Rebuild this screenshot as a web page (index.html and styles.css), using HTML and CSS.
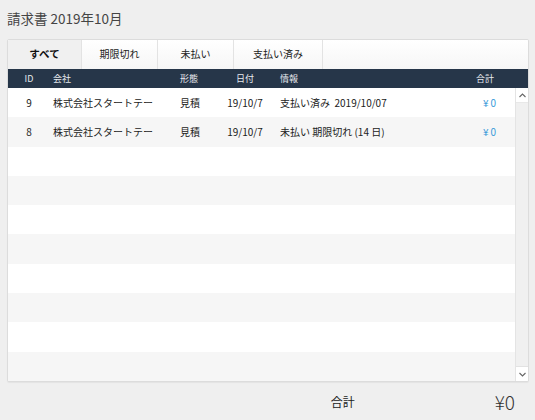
FILE: index.html
```html
<!DOCTYPE html>
<html lang="ja">
<head>
<meta charset="utf-8">
<link rel="stylesheet" href="styles.css">
</head>
<body>
<div class="title">請求書 2019年10月</div>
<div class="panel">
  <div class="tabs">
    <div class="tab active t1">すべて</div>
    <div class="tab t2">期限切れ</div>
    <div class="tab t3">未払い</div>
    <div class="tab t4">支払い済み</div>
  </div>
  <div class="head grid">
    <div class="c-id">ID</div>
    <div class="c-co">会社</div>
    <div class="c-ty">形態</div>
    <div class="c-dt">日付</div>
    <div class="c-in">情報</div>
    <div class="c-tot">合計</div>
  </div>
  <div class="body">
    <div class="rows">
      <div class="row grid">
        <div class="c-id">9</div>
        <div class="c-co">株式会社スタートテー</div>
        <div class="c-ty">見積</div>
        <div class="c-dt">19/10/7</div>
        <div class="c-in">支払い済み&nbsp;&nbsp;2019/10/07</div>
        <div class="c-tot money">¥0</div>
      </div>
      <div class="row grid">
        <div class="c-id">8</div>
        <div class="c-co">株式会社スタートテー</div>
        <div class="c-ty">見積</div>
        <div class="c-dt">19/10/7</div>
        <div class="c-in">未払い 期限切れ (14 日)</div>
        <div class="c-tot money">¥0</div>
      </div>
      <div class="row"></div>
      <div class="row"></div>
      <div class="row"></div>
      <div class="row"></div>
      <div class="row"></div>
      <div class="row"></div>
      <div class="row"></div>
      <div class="row"></div>
    </div>
    <div class="scrollbar">
      <div class="sb-btn"><svg width="7" height="5" viewBox="0 0 7 5"><polyline points="0.5,4 3.5,1 6.5,4" fill="none" stroke="#666" stroke-width="1.1"/></svg></div>
      <div class="sb-track"></div>
      <div class="sb-btn"><svg width="7" height="5" viewBox="0 0 7 5"><polyline points="0.5,1 3.5,4 6.5,1" fill="none" stroke="#666" stroke-width="1.1"/></svg></div>
    </div>
  </div>
</div>
<div class="footer">
  <div class="f-label">合計</div>
  <div class="f-value">¥0</div>
</div>
</body>
</html>
```
FILE: styles.css
```css
html, body {
  margin: 0;
  padding: 0;
}
body {
  background: #efefef;
  font-family: "Noto Sans CJK JP", "Noto Sans", sans-serif;
  color: #333;
  width: 535px;
  height: 420px;
  overflow: hidden;
}
.title {
  height: 39px;
  line-height: 36px;
  padding-left: 7px;
  font-size: 13.5px;
  color: #444;
}
.panel {
  margin-left: 7px;
  width: 520px;
  height: 341px;
  border: 1px solid #dcdcdc;
  border-radius: 2px;
  background: #fff;
  box-shadow: 0 1px 1px rgba(0,0,0,0.05);
  display: flex;
  flex-direction: column;
  overflow: hidden;
}
.tabs {
  height: 29px;
  display: flex;
  background: linear-gradient(#ffffff, #f6f6f6);
  flex: none;
}
.tab {
  height: 29px;
  line-height: 28px;
  text-align: center;
  font-size: 10px;
  color: #222;
  border-right: 1px solid #e3e3e3;
  box-sizing: border-box;
}
.tab.active {
  background: #f0f0f0;
  font-weight: bold;
  font-size: 10.5px;
  color: #111;
}
.t1 { width: 74px; }
.t2 { width: 76px; }
.t3 { width: 76px; }
.t4 { width: 89px; }

.grid {
  display: grid;
  grid-template-columns: 42px 129px 39px 54px 1fr 60px;
  align-items: center;
}
.head {
  height: 19px;
  background: #263649;
  color: #e6eaef;
  font-size: 9px;
  padding-right: 34px;
  flex: none;
}
.c-id { text-align: center; }
.c-co { padding-left: 3px; }
.c-ty { padding-left: 1px; }
.c-dt { text-align: center; }
.c-in { padding-left: 8px; }
.c-tot { text-align: right; }

.body {
  flex: 1;
  display: flex;
}
.rows {
  flex: 1;
  display: grid;
  grid-template-rows: repeat(10, 1fr);
}
.row {
  font-size: 10px;
  color: #222;
  padding-right: 19px;
}
.row:nth-child(even) {
  background: #f6f6f6;
}
.money {
  color: #3a9ad9;
  letter-spacing: 2px;
  margin-right: -2px;
}
.scrollbar {
  width: 12px;
  flex: none;
  display: flex;
  flex-direction: column;
  background: #f0f0f0;
  border-left: 1px solid #e4e4e4;
}
.sb-btn {
  height: 14px;
  background: #fff;
  display: flex;
  align-items: center;
  justify-content: center;
  border-bottom: 1px solid #e8e8e8;
}
.sb-btn:last-child {
  border-bottom: none;
  border-top: 1px solid #e2e2e2;
}
.sb-track {
  flex: 1;
}
.footer {
  height: 38px;
  display: flex;
  align-items: center;
  justify-content: flex-end;
  padding-right: 20px;
}
.f-label {
  font-size: 12px;
  color: #222;
  margin-right: 140px;
}
.f-value {
  font-size: 19px;
  font-weight: 300;
  color: #333;
}
```
